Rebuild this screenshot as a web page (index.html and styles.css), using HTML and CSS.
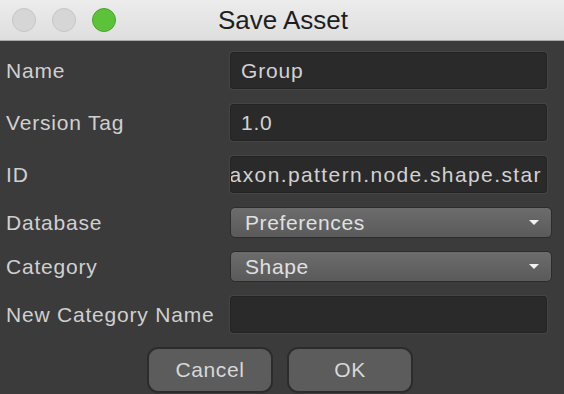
FILE: index.html
```html
<!DOCTYPE html>
<html>
<head>
    <meta charset="utf-8" />
    <title>Save Asset</title>
    <link rel="stylesheet" href="styles.css">
</head>
<body>
    <div class="window">
        <div class="titlebar">
            <div class="lights">
                <span class="light"></span>
                <span class="light"></span>
                <span class="light green"></span>
            </div>
            <div class="title">Save Asset</div>
        </div>

        <div class="content">
            <div class="form">
                <div class="label">Name</div>
                <div class="field"><div class="input">Group</div></div>

                <div class="label">Version Tag</div>
                <div class="field"><div class="input">1.0</div></div>

                <div class="label">ID</div>
                <div class="field"><div class="input scrolled"><span>com.taxon.pattern.node.shape.star</span></div></div>

                <div class="label">Database</div>
                <div class="field"><div class="select">Preferences<span class="arrow"></span></div></div>

                <div class="label">Category</div>
                <div class="field"><div class="select">Shape<span class="arrow"></span></div></div>

                <div class="label">New Category Name</div>
                <div class="field"><div class="input"></div></div>
            </div>

            <div class="buttons">
                <button class="button">Cancel</button>
                <button class="button">OK</button>
            </div>
        </div>
    </div>
</body>
</html>
```

FILE: styles.css
```css
body {
    margin: 0;
    padding: 0;
    background: #3b3b3b;
    font-family: "Liberation Sans", Arial, sans-serif;
    overflow: hidden;
}

.window {
    width: 564px;
    height: 394px;
    background: #3b3b3b;
    overflow: hidden;
}

.titlebar {
    position: relative;
    height: 40px;
    background: linear-gradient(#ececec, #dedede);
    border-bottom: 1px solid #a9a9a9;
    display: flex;
    align-items: center;
    justify-content: center;
}

.lights {
    position: absolute;
    left: 12px;
    top: 8px;
    display: flex;
    gap: 16px;
}

.light {
    width: 22px;
    height: 22px;
    border-radius: 50%;
    background: #d6d6d6;
    border: 1px solid #c6c6c6;
}

.light.green {
    background: #5cc23a;
    border-color: #4ba52e;
}

.title {
    font-size: 26px;
    color: #1e1e1e;
    padding-left: 2px;
}

.content {
    padding: 10px 0 0 6px;
}

.form {
    display: grid;
    grid-template-columns: 224px 322px;
    row-gap: 13px;
    align-items: center;
}

.label {
    font-size: 21px;
    letter-spacing: 0.8px;
    color: #d0d0d0;
}

.input {
    width: 317px;
    height: 37px;
    box-sizing: border-box;
    background: #2a2a2a;
    border: 1px solid #232323;
    box-shadow: 0 0 0 1px #454545;
    border-radius: 3px;
    color: #d2d2d2;
    font-size: 21px;
    letter-spacing: 0.8px;
    line-height: 35px;
    padding-left: 10px;
    margin: 1px 0;
    white-space: nowrap;
}

.input.scrolled {
    display: flex;
    justify-content: flex-end;
    overflow: hidden;
    padding-left: 0;
    padding-right: 4px;
    letter-spacing: 1.4px;
}

.select {
    height: 31px;
    box-sizing: border-box;
    background: linear-gradient(#6c6c6c, #5a5a5a);
    border: 1px solid #2c2c2c;
    border-radius: 5px;
    color: #e0e0e0;
    font-size: 21px;
    letter-spacing: 0.6px;
    padding-left: 14px;
    padding-right: 12px;
    display: flex;
    align-items: center;
}

.arrow {
    margin-left: auto;
    width: 0;
    height: 0;
    border-left: 5px solid transparent;
    border-right: 5px solid transparent;
    border-top: 5px solid #f2f2f2;
}

.buttons {
    display: flex;
    gap: 14px;
    padding-left: 141px;
    margin-top: 13px;
}

.button {
    width: 126px;
    height: 46px;
    background: #5c5c5c;
    border: 2px solid #2c2c2c;
    border-radius: 11px;
    color: #d8d8d8;
    font-family: "Liberation Sans", Arial, sans-serif;
    font-size: 21px;
    letter-spacing: 0.6px;
    padding: 0;
}
```
